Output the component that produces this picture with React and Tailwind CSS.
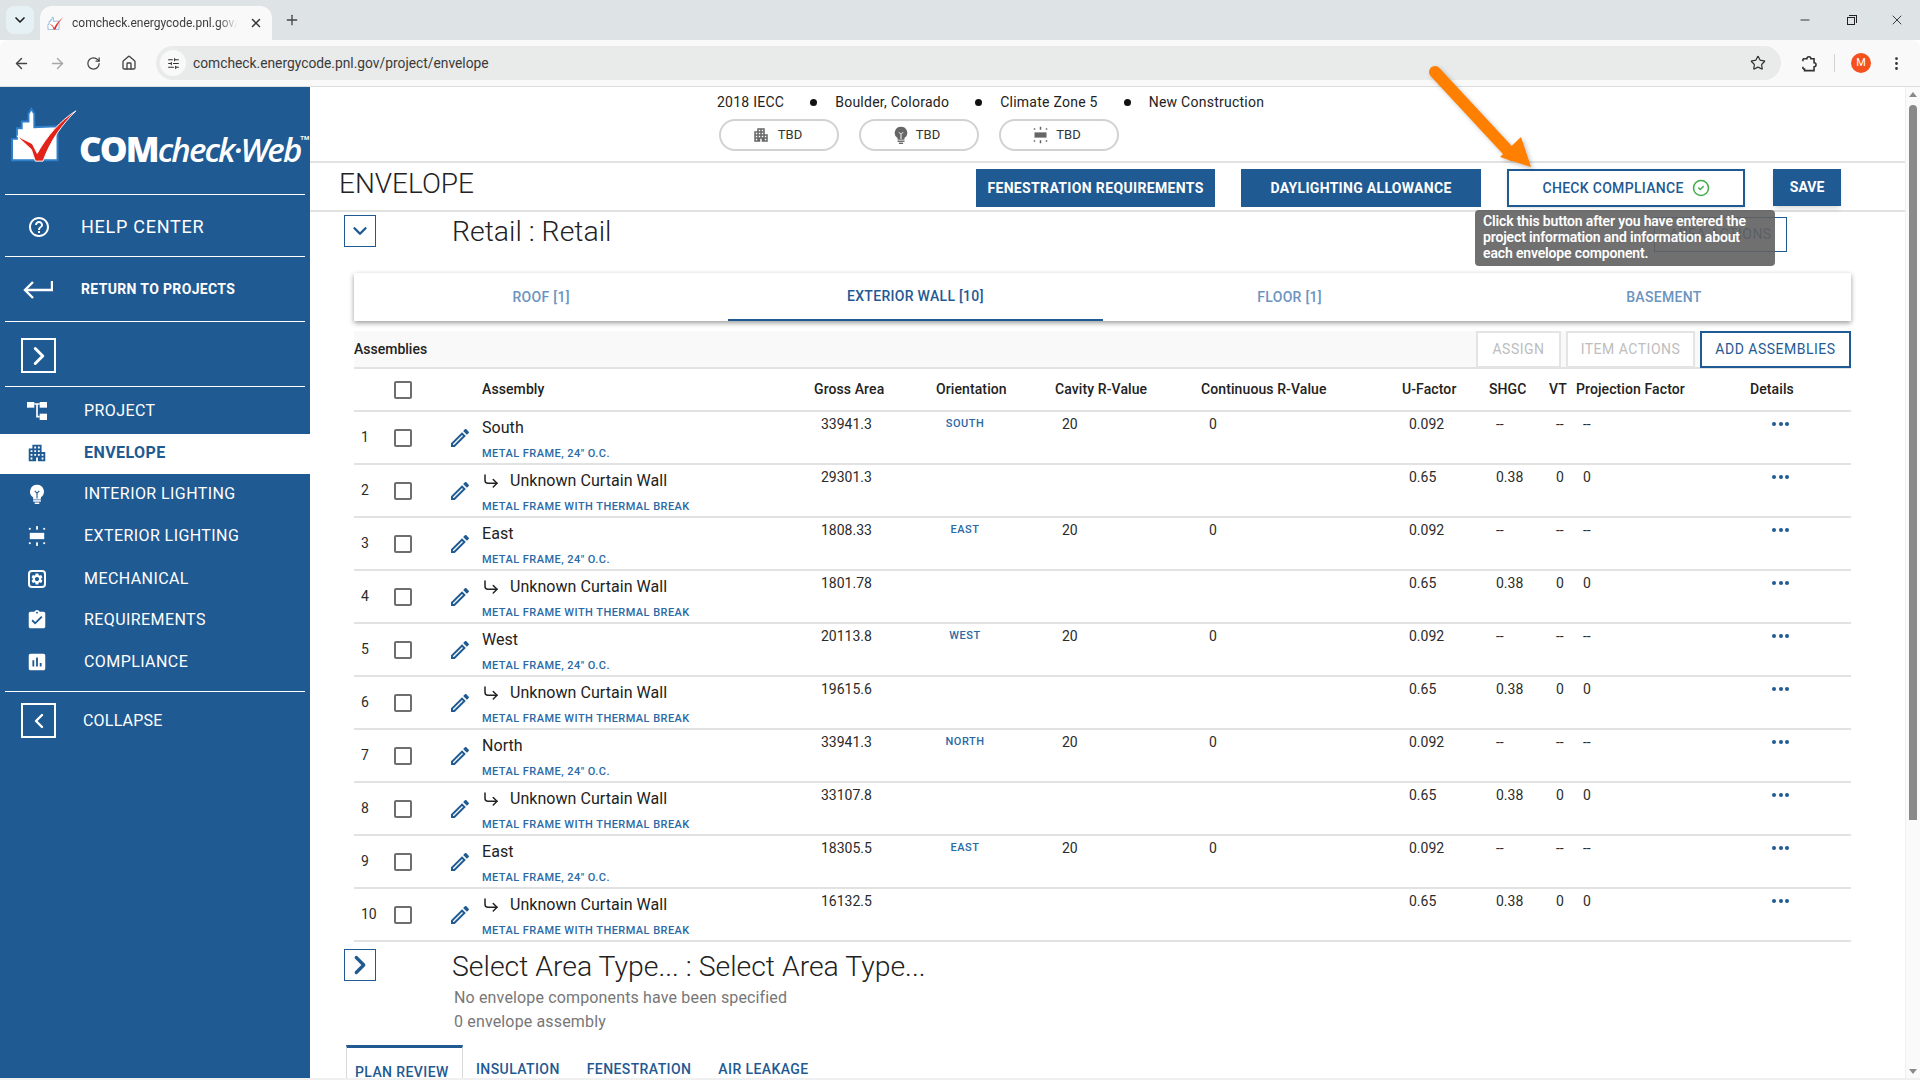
import React from 'react';
import { ArrowLeft, ArrowRight, RotateCw, Home, Star, MoreVertical, SlidersHorizontal, X, Plus, Minus, ChevronDown, ChevronRight, ChevronLeft, CornerDownRight, CircleCheck } from 'lucide-react';
import { MdApartment, MdSettings, MdAssignmentTurnedIn, MdAssessment, MdHelpOutline, MdOutlineEdit } from 'react-icons/md';

const LogoMark = ({ className, outline = '#2f7fc9' }) => (
  <svg viewBox="0 0 72 60" className={className}>
    <path d="M4 55V33h5V22h5v-7h7V7l3-5 3 5v14l24-1v35z" fill="#fff" stroke={outline} strokeWidth="2" />
    <path d="M9 30l16 8 5 10C40 30 54 14 70 4 56 18 44 34 36 56h-8L24 44z" fill="#e2231a" stroke="#fff" strokeWidth="1" />
  </svg>
);

const ProjectIcon = () => (
  <svg viewBox="0 0 60 54" className="w-[20px] h-[18px]" fill="#fff">
    <rect x="0" y="0" width="22" height="17" />
    <rect x="38" y="0" width="22" height="17" />
    <rect x="38" y="35" width="22" height="19" />
    <path d="M22 6h16M30 6v38h8" stroke="#fff" strokeWidth="5" fill="none" />
  </svg>
);

const BulbIcon = ({ className, color = '#fff', inner = '#1f5a93' }) => (
  <svg viewBox="0 0 20 26" className={className} fill={color}>
    <path d="M10 1a9 9 0 0 0-5 16.5V20h10v-2.500A9 9 0 0 0 10 1z" />
    <path d="M7 9l3 3 3-3M10 12v7" stroke={inner} strokeWidth="1.4" fill="none" />
    <rect x="5" y="21" width="10" height="2" />
    <rect x="7" y="24" width="6" height="2" />
  </svg>
);

const ExteriorIcon = ({ className, color = '#fff' }) => (
  <svg viewBox="0 0 20 24" className={className} fill={color}>
    <rect x="2" y="8.500" width="16" height="7" />
    <rect x="9" y="1" width="2" height="4" />
    <rect x="9" y="19" width="2" height="4" />
    <rect x="1" y="3" width="2" height="2" />
    <rect x="17" y="3" width="2" height="2" />
    <rect x="1" y="19" width="2" height="2" />
    <rect x="17" y="19" width="2" height="2" />
  </svg>
);

const MechanicalIcon = () => (
  <span className="w-[18px] h-[18px] rounded-sm border-2 border-white flex items-center justify-center">
    <MdSettings size={14} color="#fff" />
  </span>
);

const navItems = [
  { label: 'PROJECT', icon: <ProjectIcon />, h: 'h-[47px]' },
  { label: 'ENVELOPE', icon: <MdApartment size={22} />, h: 'h-[40px] pb-[2px]', active: true },
  { label: 'INTERIOR LIGHTING', icon: <BulbIcon className="w-[16px] h-[20px]" />, h: 'h-[39px]' },
  { label: 'EXTERIOR LIGHTING', icon: <ExteriorIcon className="w-[18px] h-[22px]" />, h: 'h-[45px]' },
  { label: 'MECHANICAL', icon: <MechanicalIcon />, h: 'h-[41px]' },
  { label: 'REQUIREMENTS', icon: <MdAssignmentTurnedIn size={22} />, h: 'h-[42px]' },
  { label: 'COMPLIANCE', icon: <MdAssessment size={22} />, h: 'h-[42px]' },
];

const wall = { sub: 'METAL FRAME, 24" O.C.', cavity: '20', cont: '0', u: '0.092', shgc: '--', vt: '--', proj: '--' };
const curtain = { name: 'Unknown Curtain Wall', child: true, sub: 'METAL FRAME WITH THERMAL BREAK', u: '0.65', shgc: '0.38', vt: '0', proj: '0' };

const rows = [
  { ...wall, name: 'South', area: '33941.3', orient: 'SOUTH' },
  { ...curtain, area: '29301.3' },
  { ...wall, name: 'East', area: '1808.33', orient: 'EAST' },
  { ...curtain, area: '1801.78' },
  { ...wall, name: 'West', area: '20113.8', orient: 'WEST' },
  { ...curtain, area: '19615.6' },
  { ...wall, name: 'North', area: '33941.3', orient: 'NORTH' },
  { ...curtain, area: '33107.8' },
  { ...wall, name: 'East', area: '18305.5', orient: 'EAST' },
  { ...curtain, area: '16132.5' },
];

const gridCols = 'grid grid-cols-[31px_60px_37px_325px_122px_119px_146px_201px_87px_60px_28px_175px_106px]';

const Checkbox = () => <span className="block w-[18px] h-[18px] rounded-[2px] border-2 border-[#6e6e6e] ml-[9px]" />;

const Pill = ({ icon }) => (
  <div className="w-[120px] h-[32px] rounded-full border-2 border-[#d0d2d3] flex items-center justify-center gap-[8px] pr-[4px] text-[13px] text-[#333]">
    {icon}
    <span>TBD</span>
  </div>
);

const BrowserChrome = () => (
  <>
    <div className="h-[40px] bg-[#dee3e6] flex relative shrink-0">
      <div className="absolute left-[6px] top-[6px] w-[28px] h-[28px] rounded-lg bg-[#e6f1f5] flex items-center justify-center">
        <ChevronDown size={16} strokeWidth={2.5} color="#1f1f1f" />
      </div>
      <div className="absolute left-[40px] top-[6px] w-[232px] h-[34px] rounded-t-xl bg-[#f9f9fa] flex items-center pl-[7px]">
        <LogoMark className="w-[17px] h-[17px]" />
        <span className="ml-[8px] w-[166px] overflow-hidden whitespace-nowrap text-[12px] text-[#3c3c3c] [mask-image:linear-gradient(to_right,#000_88%,transparent)]">comcheck.energycode.pnl.gov/project/envelope</span>
        <X size={14} strokeWidth={2.5} color="#333" className="ml-[11px]" />
      </div>
      <Plus size={16} strokeWidth={2} color="#444" className="absolute left-[284px] top-[12px]" />
      <Minus size={14} strokeWidth={1.5} color="#222" className="absolute left-[1798px] top-[13px]" />
      <span className="absolute left-[1847px] top-[17px] w-[8px] h-[8px] border border-[#222]" />
      <span className="absolute left-[1849px] top-[15px] w-[8px] h-[8px] border-t border-r border-[#222]" />
      <X size={16} strokeWidth={1.3} color="#222" className="absolute left-[1889px] top-[12px]" />
    </div>
    <div className="h-[47px] bg-[#f9f9fa] border-b border-[#dedede] flex items-center shrink-0 rounded-t-lg">
      <ArrowLeft size={17} color="#444" className="ml-[13px]" />
      <ArrowRight size={17} color="#a5a7a8" className="ml-[19px]" />
      <RotateCw size={15} color="#444" className="ml-[20px]" />
      <Home size={16} color="#444" className="ml-[20px]" />
      <div className="ml-[19px] w-[1625px] h-[34px] rounded-full bg-[#e9ebeb] flex items-center pl-[4px]">
        <span className="w-[26px] h-[26px] rounded-full bg-[#f9f9fa] flex items-center justify-center">
          <SlidersHorizontal size={13} color="#333" />
        </span>
        <span className="ml-[7px] text-[13.8px] text-[#3a3a3a]">comcheck.energycode.pnl.gov/project/envelope</span>
        <Star size={16} strokeWidth={1.8} color="#333" className="ml-auto mr-[15px]" />
      </div>
      <svg viewBox="0 0 24 24" className="w-[19px] h-[19px] ml-[18px]" fill="none" stroke="#333" strokeWidth="2">
        <path d="M5 6h5a2.500 2.500 0 0 1 5 0h4v5a2.500 2.500 0 0 1 0 5v5H7v-2H5" />
        <path d="M5 6v3M5 16v3" />
      </svg>
      <span className="ml-[16px] w-px h-[18px] bg-[#cfd3d5]" />
      <span className="ml-[16px] w-[20px] h-[20px] rounded-full bg-[#f4511e] text-white text-[11px] flex items-center justify-center">M</span>
      <MoreVertical size={17} color="#333" className="ml-[17px]" />
    </div>
  </>
);

const Sidebar = () => (
  <aside className="w-[310px] shrink-0 bg-[#1f5a93] text-white flex flex-col">
    <div className="h-[107px] flex items-start pl-[8px] pt-[20px] shrink-0">
      <LogoMark className="w-[70px] h-[58px]" />
      <span className="ml-[1px] mt-[22px] text-[33px] leading-[40px] font-bold italic tracking-[-1.9px] font-['Open_Sans',sans-serif] whitespace-nowrap">
        <span className="not-italic font-extrabold text-[35px]">COM</span><span className="font-semibold">check·Web</span>
      </span>
      <span className="text-[6px] font-bold mt-[26px]">TM</span>
    </div>
    <div className="mx-[5px] h-px bg-white shrink-0" />
    <div className="h-[61px] flex items-center pt-[2px] shrink-0">
      <MdHelpOutline size={24} className="ml-[27px]" />
      <span className="ml-[30px] text-[18px] tracking-[0.75px]">HELP CENTER</span>
    </div>
    <div className="mx-[5px] h-px bg-white shrink-0" />
    <div className="h-[64px] flex items-center shrink-0">
      <svg viewBox="0 0 30 20" className="w-[30px] h-[20px] ml-[23px]" fill="none" stroke="#fff" strokeWidth="2.4">
        <path d="M29 2v9H3" />
        <path d="M10 3l-8 8 8 8" />
      </svg>
      <span className="ml-[28px] text-[14px] font-bold tracking-[0.35px]">RETURN TO PROJECTS</span>
    </div>
    <div className="mx-[5px] h-px bg-white shrink-0" />
    <div className="h-[64px] pl-[21px] pt-[16px] shrink-0">
      <span className="w-[35px] h-[35px] border-2 border-white flex items-center justify-center">
        <ChevronRight size={30} strokeWidth={2.4} />
      </span>
    </div>
    <div className="mx-[5px] h-px bg-white shrink-0" />
    {navItems.map((item) => (
      <div key={item.label} className={`${item.h} shrink-0 flex items-center ${item.active ? 'bg-white text-[#1f5a93] font-bold' : ''}`}>
        <span className="w-[22px] ml-[26px] flex justify-center">{item.icon}</span>
        <span className="ml-[36px] text-[16px] tracking-[0.42px]">{item.label}</span>
      </div>
    ))}
    <div className="mt-[8px] mx-[5px] h-px bg-white shrink-0" />
    <div className="mt-[11px] flex items-center pl-[21px] shrink-0">
      <span className="w-[35px] h-[35px] border-2 border-white flex items-center justify-center">
        <ChevronLeft size={24} strokeWidth={2.4} />
      </span>
      <span className="ml-[27px] text-[16px] tracking-[0.2px]">COLLAPSE</span>
    </div>
  </aside>
);

const Table = () => (
  <div className="w-[1497px] ml-[44px]">
    <div className="h-[38px] flex items-start bg-[#f9f9f9] border-b-2 border-[#e2e2e2]">
      <span className="text-[14px] leading-[36px] font-medium text-[#222]">Assemblies</span>
      <button className="ml-auto w-[85px] h-[37px] bg-white border-2 border-[#e4e4e4] text-[14px] tracking-[0.5px] text-[#bdbdbd]">ASSIGN</button>
      <button className="ml-[5px] w-[129px] h-[37px] bg-white border-2 border-[#e4e4e4] text-[14px] tracking-[0.5px] text-[#bdbdbd]">ITEM ACTIONS</button>
      <button className="ml-[5px] w-[151px] h-[37px] bg-white border-2 border-[#1f5a93] text-[14px] tracking-[0.5px] text-[#1f5a93]">ADD ASSEMBLIES</button>
    </div>
    <div className={`${gridCols} h-[43px] items-center border-b-2 border-[#e2e2e2] text-[14px] font-medium tracking-[0.1px] text-[#222]`}>
      <span />
      <Checkbox />
      <span />
      <span>Assembly</span>
      <span className="pl-[7px]">Gross Area</span>
      <span className="pl-[7px]">Orientation</span>
      <span className="pl-[7px]">Cavity R-Value</span>
      <span className="pl-[7px]">Continuous R-Value</span>
      <span className="pl-[7px]">U-Factor</span>
      <span className="pl-[7px]">SHGC</span>
      <span className="pl-[7px]">VT</span>
      <span className="pl-[6px]">Projection Factor</span>
      <span className="pl-[5px]">Details</span>
    </div>
    {rows.map((row, i) => (
      <div key={i} className={`${gridCols} h-[53px] border-b-2 border-[#e2e2e2] text-[14px] text-[#2b2b2b]`}>
        <span className="pl-[7px] self-center">{i + 1}</span>
        <span className="self-center"><Checkbox /></span>
        <span className="self-center pl-[3px]"><MdOutlineEdit size={24} color="#1f5a93" /></span>
        <div className="relative">
          <div className="h-[32px] flex items-center text-[16px] tracking-[0.05px] text-[#222]">
            {row.child && <CornerDownRight size={18} strokeWidth={2} className="mr-[10px]" />}
            {row.name}
          </div>
          <div className="mt-[2px] text-[11px] leading-[16px] font-medium tracking-[0.45px] text-[#2a69a5]">{row.sub}</div>
        </div>
        <span className="pl-[14px] pt-[2px] leading-[20px]">{row.area}</span>
        <span className="pt-[2px] leading-[20px]">
          <span className="block w-[72px] text-center text-[11px] font-medium tracking-[0.5px] text-[#2a69a5]">{row.orient}</span>
        </span>
        <span className="pl-[14px] pt-[2px] leading-[20px]">{row.cavity}</span>
        <span className="pl-[15px] pt-[2px] leading-[20px]">{row.cont}</span>
        <span className="pl-[14px] pt-[2px] leading-[20px]">{row.u}</span>
        <span className="pl-[14px] pt-[2px] leading-[20px]">{row.shgc}</span>
        <span className="pl-[14px] pt-[2px] leading-[20px]">{row.vt}</span>
        <span className="pl-[13px] pt-[2px] leading-[20px]">{row.proj}</span>
        <span className="pl-[27px] pt-[10px] flex gap-[2.5px]">
          <i className="w-[4px] h-[4px] rounded-full bg-[#1f5a93]" />
          <i className="w-[4px] h-[4px] rounded-full bg-[#1f5a93]" />
          <i className="w-[4px] h-[4px] rounded-full bg-[#1f5a93]" />
        </span>
      </div>
    ))}
  </div>
);

const Main = () => (
  <main className="flex-1 flex flex-col overflow-hidden text-[#222]">
    <div className="h-[76px] shrink-0 border-b-2 border-[#e2e2e2] flex flex-col">
      <div className="flex items-center h-[30px] pl-[407px] text-[14px] tracking-[0.25px] text-[#222]">
        <span>2018 IECC</span>
        <span className="ml-[26px] w-[7px] h-[7px] rounded-full bg-[#111]" />
        <span className="ml-[18px]">Boulder, Colorado</span>
        <span className="ml-[26px] w-[7px] h-[7px] rounded-full bg-[#111]" />
        <span className="ml-[18px]">Climate Zone 5</span>
        <span className="ml-[26px] w-[7px] h-[7px] rounded-full bg-[#111]" />
        <span className="ml-[18px]">New Construction</span>
      </div>
      <div className="flex gap-[20px] pl-[409px] mt-[2px]">
        <Pill icon={<MdApartment size={18} color="#666" />} />
        <Pill icon={<BulbIcon className="w-[14px] h-[18px]" color="#666" inner="#fff" />} />
        <Pill icon={<ExteriorIcon className="w-[15px] h-[18px]" color="#666" />} />
      </div>
    </div>
    <div className="h-[49px] shrink-0 border-b-2 border-[#e2e2e2] flex items-start pl-[29px] pt-[6px]">
      <h1 className="text-[28px] leading-[32px] font-light -mt-[1px]">ENVELOPE</h1>
      <button className="ml-[502px] w-[239px] h-[38px] bg-[#1f5a93] text-white text-[14px] font-bold tracking-[0.35px]">FENESTRATION REQUIREMENTS</button>
      <button className="ml-[26px] w-[240px] h-[38px] bg-[#1f5a93] text-white text-[14px] font-bold tracking-[0.3px]">DAYLIGHTING ALLOWANCE</button>
      <button className="ml-[26px] w-[238px] h-[38px] border-2 border-[#1f5a93] shadow-sm text-[#1f5a93] text-[14px] font-medium tracking-[0.3px] flex items-center justify-center gap-[8px]">
        CHECK COMPLIANCE
        <CircleCheck size={18} strokeWidth={2} color="#3fae49" />
      </button>
      <button className="ml-[28px] w-[68px] h-[37px] bg-[#1f5a93] shadow-md text-white text-[14px] font-bold">SAVE</button>
    </div>
    <div className="h-[61px] shrink-0 relative flex pl-[34px] pt-[3px]">
      <span className="w-[32px] h-[32px] border border-[#1f5a93] flex items-center justify-center">
        <ChevronDown size={22} strokeWidth={2.6} color="#1f5a93" />
      </span>
      <h2 className="ml-[76px] text-[28.4px] leading-[34px] font-light">Retail : Retail</h2>
      <button className="absolute left-[1344px] top-[5px] w-[133px] h-[35px] border border-[#1f5a93] text-[14px] tracking-[0.5px] text-[#1f5a93]">AREA ACTIONS</button>
    </div>
    <div className="w-[1497px] ml-[44px] h-[48px] shrink-0 grid grid-cols-4 shadow-[0_2px_5px_rgba(0,0,0,0.4)] text-[14px] font-medium tracking-[0.3px] text-[#6b94bf]">
      <div className="flex items-center justify-center">ROOF [1]</div>
      <div className="flex items-center justify-center border-b-2 border-[#1f5a93] text-[#1f5a93]">EXTERIOR WALL [10]</div>
      <div className="flex items-center justify-center">FLOOR [1]</div>
      <div className="flex items-center justify-center">BASEMENT</div>
    </div>
    <div className="h-[10px] shrink-0" />
    <Table />
    <div className="flex pl-[34px] pt-[7px] shrink-0">
      <span className="w-[32px] h-[32px] border border-[#1f5a93] flex items-center justify-center">
        <ChevronRight size={30} strokeWidth={2.6} color="#1f5a93" />
      </span>
      <div className="ml-[76px]">
        <h2 className="mt-[1px] text-[28.4px] leading-[34px] font-light">Select Area Type... : Select Area Type...</h2>
        <p className="ml-[2px] mt-[2px] text-[16px] leading-[24px] tracking-[0.15px] text-[#777]">No envelope components have been specified</p>
        <p className="ml-[2px] text-[16px] leading-[24px] tracking-[0.15px] text-[#777]">0 envelope assembly</p>
      </div>
    </div>
    <div className="flex pl-[36px] mt-[11px] text-[14px] font-medium tracking-[0.4px] text-[#1f5a93] shrink-0">
      <span className="w-[117px] h-[40px] border-t-[3px] border-x border-t-[#1f5a93] border-x-[#d9d9d9] pt-[14px] pl-[8px] whitespace-nowrap">PLAN REVIEW</span>
      <span className="ml-[13px] pt-[14px]">INSULATION</span>
      <span className="ml-[27px] pt-[14px]">FENESTRATION</span>
      <span className="ml-[27px] pt-[14px]">AIR LEAKAGE</span>
    </div>
  </main>
);

const Scrollbar = () => (
  <div className="w-[15px] shrink-0 bg-[#fafafa] border-l border-[#f0f0f0] relative">
    <span className="absolute left-[3px] top-[5px] w-0 h-0 border-x-[4px] border-x-transparent border-b-[5px] border-b-[#8a8a8a]" />
    <span className="absolute left-[3px] top-[18px] w-[8px] h-[715px] rounded-t-sm bg-[#8a8a8a]" />
    <span className="absolute left-[3px] bottom-[4px] w-0 h-0 border-x-[4px] border-x-transparent border-t-[5px] border-t-[#8a8a8a]" />
  </div>
);

export default function App() {
  return (
    <div className="w-[1920px] h-[1080px] overflow-hidden flex flex-col bg-white relative font-[Roboto,sans-serif]">
      <BrowserChrome />
      <div className="flex flex-1 min-h-0">
        <Sidebar />
        <Main />
        <Scrollbar />
      </div>
      <div className="h-[2px] bg-[#f0f0f0] shrink-0" />

      {/* tooltip over the area actions button */}
      <div className="absolute left-[1475px] top-[210px] w-[300px] h-[56px] rounded bg-[#616161]/90 px-[8px] py-[3px] text-[14px] leading-[16px] font-semibold tracking-[-0.15px] text-white">
        Click this button after you have entered the project information and information about each envelope component.
      </div>

      {/* orange callout arrow */}
      <svg className="absolute left-[1420px] top-[60px] w-[130px] h-[120px] drop-shadow-[2px_2px_2px_rgba(0,0,0,0.25)]" viewBox="0 0 130 120">
        <path d="M15 12L92 95" stroke="#ff7f00" strokeWidth="12" strokeLinecap="round" fill="none" />
        <path d="M101 77L111 107L80 97z" fill="#ff7f00" />
      </svg>
    </div>
  );
}
